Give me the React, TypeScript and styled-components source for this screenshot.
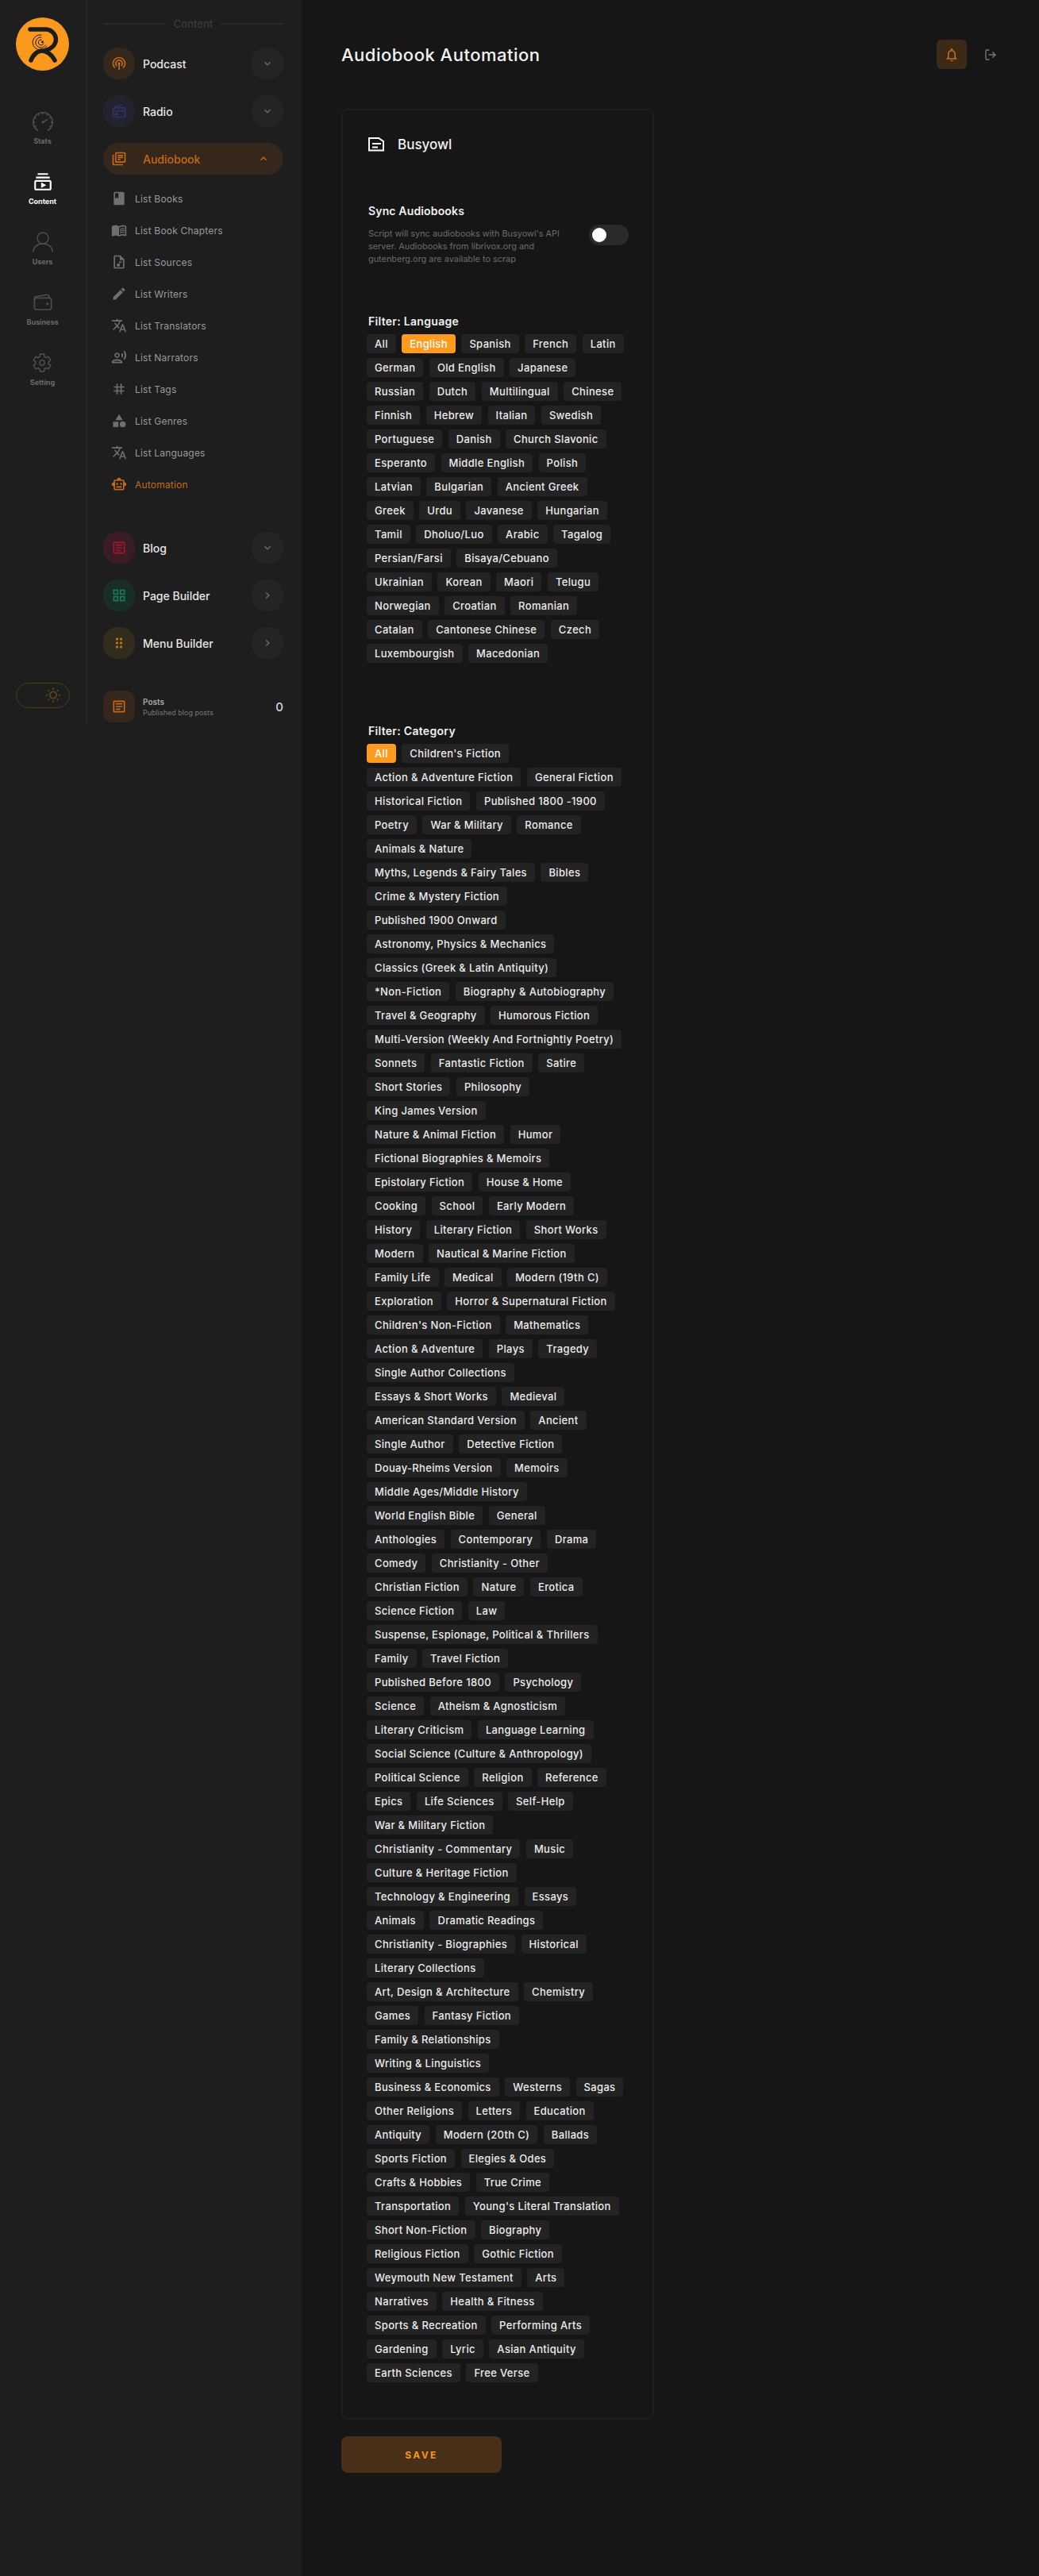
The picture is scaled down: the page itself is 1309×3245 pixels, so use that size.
import React from 'react';
import styled, { createGlobalStyle } from 'styled-components';
import {
  MdOutlineLibraryBooks, MdBook, MdOutlineMenuBook, MdOutlineAudioFile, MdEdit, MdTranslate,
  MdOutlineRecordVoiceOver, MdTag, MdCategory, MdOutlineSmartToy, MdOutlineArticle, MdOutlineGridView,
  MdDragIndicator, MdOutlineRadio, MdOutlinePodcasts, MdKeyboardArrowDown, MdKeyboardArrowUp,
  MdKeyboardArrowRight, MdOutlineNotifications, MdOutlineSubscriptions, MdOutlineWbSunny,
} from 'react-icons/md';
import { SlSpeedometer } from 'react-icons/sl';
import { IoSettingsOutline, IoWalletOutline } from 'react-icons/io5';
import { FiLogOut } from 'react-icons/fi';

const languageRows = [
  ['All', 'English', 'Spanish', 'French', 'Latin'],
  ['German', 'Old English', 'Japanese'],
  ['Russian', 'Dutch', 'Multilingual', 'Chinese'],
  ['Finnish', 'Hebrew', 'Italian', 'Swedish'],
  ['Portuguese', 'Danish', 'Church Slavonic'],
  ['Esperanto', 'Middle English', 'Polish'],
  ['Latvian', 'Bulgarian', 'Ancient Greek'],
  ['Greek', 'Urdu', 'Javanese', 'Hungarian'],
  ['Tamil', 'Dholuo/Luo', 'Arabic', 'Tagalog'],
  ['Persian/Farsi', 'Bisaya/Cebuano'],
  ['Ukrainian', 'Korean', 'Maori', 'Telugu'],
  ['Norwegian', 'Croatian', 'Romanian'],
  ['Catalan', 'Cantonese Chinese', 'Czech'],
  ['Luxembourgish', 'Macedonian'],
];

const categoryRows = [
  ['All', "Children's Fiction"],
  ['Action & Adventure Fiction', 'General Fiction'],
  ['Historical Fiction', 'Published 1800 -1900'],
  ['Poetry', 'War & Military', 'Romance'],
  ['Animals & Nature'],
  ['Myths, Legends & Fairy Tales', 'Bibles'],
  ['Crime & Mystery Fiction'],
  ['Published 1900 Onward'],
  ['Astronomy, Physics & Mechanics'],
  ['Classics (Greek & Latin Antiquity)'],
  ['*Non-Fiction', 'Biography & Autobiography'],
  ['Travel & Geography', 'Humorous Fiction'],
  ['Multi-Version (Weekly And Fortnightly Poetry)'],
  ['Sonnets', 'Fantastic Fiction', 'Satire'],
  ['Short Stories', 'Philosophy'],
  ['King James Version'],
  ['Nature & Animal Fiction', 'Humor'],
  ['Fictional Biographies & Memoirs'],
  ['Epistolary Fiction', 'House & Home'],
  ['Cooking', 'School', 'Early Modern'],
  ['History', 'Literary Fiction', 'Short Works'],
  ['Modern', 'Nautical & Marine Fiction'],
  ['Family Life', 'Medical', 'Modern (19th C)'],
  ['Exploration', 'Horror & Supernatural Fiction'],
  ["Children's Non-Fiction", 'Mathematics'],
  ['Action & Adventure', 'Plays', 'Tragedy'],
  ['Single Author Collections'],
  ['Essays & Short Works', 'Medieval'],
  ['American Standard Version', 'Ancient'],
  ['Single Author', 'Detective Fiction'],
  ['Douay-Rheims Version', 'Memoirs'],
  ['Middle Ages/Middle History'],
  ['World English Bible', 'General'],
  ['Anthologies', 'Contemporary', 'Drama'],
  ['Comedy', 'Christianity - Other'],
  ['Christian Fiction', 'Nature', 'Erotica'],
  ['Science Fiction', 'Law'],
  ['Suspense, Espionage, Political & Thrillers'],
  ['Family', 'Travel Fiction'],
  ['Published Before 1800', 'Psychology'],
  ['Science', 'Atheism & Agnosticism'],
  ['Literary Criticism', 'Language Learning'],
  ['Social Science (Culture & Anthropology)'],
  ['Political Science', 'Religion', 'Reference'],
  ['Epics', 'Life Sciences', 'Self-Help'],
  ['War & Military Fiction'],
  ['Christianity - Commentary', 'Music'],
  ['Culture & Heritage Fiction'],
  ['Technology & Engineering', 'Essays'],
  ['Animals', 'Dramatic Readings'],
  ['Christianity - Biographies', 'Historical'],
  ['Literary Collections'],
  ['Art, Design & Architecture', 'Chemistry'],
  ['Games', 'Fantasy Fiction'],
  ['Family & Relationships'],
  ['Writing & Linguistics'],
  ['Business & Economics', 'Westerns', 'Sagas'],
  ['Other Religions', 'Letters', 'Education'],
  ['Antiquity', 'Modern (20th C)', 'Ballads'],
  ['Sports Fiction', 'Elegies & Odes'],
  ['Crafts & Hobbies', 'True Crime'],
  ['Transportation', "Young's Literal Translation"],
  ['Short Non-Fiction', 'Biography'],
  ['Religious Fiction', 'Gothic Fiction'],
  ['Weymouth New Testament', 'Arts'],
  ['Narratives', 'Health & Fitness'],
  ['Sports & Recreation', 'Performing Arts'],
  ['Gardening', 'Lyric', 'Asian Antiquity'],
  ['Earth Sciences', 'Free Verse'],
];

const GlobalStyle = createGlobalStyle`
  html, body {
    margin: 0;
    padding: 0;
    background: #161616;
    font-family: Inter, "Open Sans", sans-serif;
  }
  * { box-sizing: border-box; }
`;

const Page = styled.div`
  display: flex;
  width: 100%;
  height: 3245px;
  overflow: hidden;
  background: #161616;
`;

const Sidebar = styled.aside`
  display: flex;
  flex: 0 0 380px;
  align-items: flex-start;
  background: #1e1e1e;
`;

const Rail = styled.nav`
  display: flex;
  flex-direction: column;
  align-items: center;
  flex: 0 0 110px;
  height: 912px;
  padding: 22px 2px 0 0;
  border-right: 1px solid #2a2a2a;
`;

const Logo = styled.svg`
  width: 67px;
  height: 67px;
  flex: none;
  margin-bottom: 51px;
`;

const RailItem = styled.div<{ $active?: boolean }>`
  display: flex;
  flex-direction: column;
  align-items: center;
  height: 76px;
  gap: 6px;
  color: ${p => (p.$active ? '#ffffff' : '#4d4d4d')};
  font-size: 26px;

  span {
    font-size: 9px;
    font-weight: 700;
    line-height: 12px;
    color: ${p => (p.$active ? '#ffffff' : '#6a6a6a')};
  }
`;

const ThemeToggle = styled.div`
  display: flex;
  align-items: center;
  justify-content: flex-end;
  width: 68px;
  height: 32px;
  margin-top: 340px;
  padding-right: 10px;
  border: 1px solid #4a3a14;
  border-radius: 16px;
  color: #5d4716;
  font-size: 20px;
`;

const Panel = styled.div`
  flex: 1;
  display: flex;
  flex-direction: column;
  padding: 20px 23px 0 20px;
`;

const PanelHeading = styled.div`
  display: flex;
  align-items: center;
  gap: 10px;
  height: 20px;
  margin-bottom: 20px;
  font-size: 13px;
  font-weight: 500;
  color: #3a3a3a;

  &::before, &::after {
    content: '';
    flex: 1;
    height: 2px;
    background: #2a2a2a;
  }
`;

const NavGroup = styled.div<{ $top?: number }>`
  display: flex;
  flex-direction: column;
  gap: 20px;
  margin-top: ${p => p.$top ?? 0}px;
`;

const NavRow = styled.div`
  display: flex;
  align-items: center;
  height: 40px;
  gap: 10px;
  font-size: 14px;
  font-weight: 500;
  color: #e6e6e6;
`;

const Tile = styled.div<{ $bg: string; $fg: string }>`
  display: flex;
  align-items: center;
  justify-content: center;
  width: 40px;
  height: 40px;
  flex: none;
  border-radius: 18px;
  background: ${p => p.$bg};
  color: ${p => p.$fg};
  font-size: 20px;
`;

const Chevron = styled.div`
  display: flex;
  align-items: center;
  justify-content: center;
  width: 40px;
  height: 40px;
  margin-left: auto;
  border-radius: 18px;
  background: #242424;
  color: #6b6b6b;
  font-size: 16px;
`;

const ActiveRow = styled.div`
  display: flex;
  align-items: center;
  height: 40px;
  margin-top: 20px;
  padding: 0 17px 0 10px;
  border-radius: 20px;
  background: #35271b;
  color: #c26a18;
  font-size: 14px;
  font-weight: 500;

  svg:first-child {
    font-size: 20px;
    margin-right: 20px;
  }
  svg:last-child {
    font-size: 16px;
    margin-left: auto;
  }
`;

const SubList = styled.div`
  display: flex;
  flex-direction: column;
  margin-top: 10px;
`;

const SubItem = styled.div<{ $active?: boolean }>`
  display: flex;
  align-items: center;
  gap: 10px;
  height: 40px;
  padding-left: 10px;
  font-size: 12px;
  letter-spacing: 0.2px;
  color: ${p => (p.$active ? '#c26a18' : '#9a9a9a')};

  svg {
    flex: none;
    font-size: 20px;
    color: ${p => (p.$active ? '#c26a18' : '#6f6f6f')};
  }
`;

const StatRow = styled.div`
  display: flex;
  align-items: center;
  gap: 10px;
  margin-top: 40px;
`;

const StatTile = styled(Tile)`
  border-radius: 12px;
`;

const StatText = styled.div`
  display: flex;
  flex-direction: column;
  gap: 2px;
  font-size: 9px;
  color: #777777;

  strong {
    font-size: 10px;
    font-weight: 600;
    color: #a8a8a8;
  }
`;

const StatValue = styled.div`
  margin-left: auto;
  font-size: 15px;
  font-weight: 500;
  color: #cfd8dc;
`;

const Main = styled.main`
  flex: 1;
  display: flex;
  flex-direction: column;
  align-items: flex-start;
  padding: 50px 50px 0;
`;

const Header = styled.header`
  display: flex;
  align-items: center;
  width: 100%;
  height: 37px;
`;

const Title = styled.h1`
  margin: 0;
  font-size: 22px;
  font-weight: 500;
  letter-spacing: 0.5px;
  color: #f2f2f2;
`;

const BellButton = styled.div`
  display: flex;
  align-items: center;
  justify-content: center;
  width: 38px;
  height: 37px;
  margin-left: auto;
  border-radius: 6px;
  background: #3d2a16;
  color: #c26a18;
  font-size: 20px;
`;

const ExitButton = styled.div`
  display: flex;
  margin: 0 3px 0 22px;
  color: #7a7a7a;
  font-size: 16px;
`;

const Card = styled.section`
  width: 394px;
  margin-top: 50px;
  padding: 33px 30px 45px 32px;
  border: 2px solid #1e1e1e;
  border-radius: 8px;
`;

const CardTitle = styled.div`
  display: flex;
  align-items: center;
  gap: 16px;
  height: 20px;
  font-size: 17px;
  font-weight: 500;
  color: #f2f2f2;
`;

const SyncTitle = styled.div`
  height: 20px;
  margin-top: 64px;
  margin-bottom: 10px;
  font-size: 14px;
  font-weight: 600;
  letter-spacing: 0.15px;
  line-height: 20px;
  color: #f0f0f0;
`;

const SyncRow = styled.div`
  display: flex;
  justify-content: space-between;
  align-items: flex-start;
`;

const SyncText = styled.p`
  width: 245px;
  margin: 0;
  font-size: 10.9px;
  line-height: 16px;
  color: #6c6c6c;
`;

const Switch = styled.div`
  display: flex;
  align-items: center;
  width: 50px;
  height: 26px;
  margin-top: -3px;
  padding-left: 4px;
  border-radius: 13px;
  background: #2a2a2a;

  &::before {
    content: '';
    width: 18px;
    height: 18px;
    border-radius: 50%;
    background: #ffffff;
  }
`;

const FilterLabel = styled.div<{ $top: number }>`
  height: 20px;
  margin-top: ${p => p.$top}px;
  font-size: 14px;
  font-weight: 600;
  letter-spacing: 0.3px;
  line-height: 20px;
  color: #f0f0f0;
`;

const ChipList = styled.div`
  display: flex;
  flex-direction: column;
  gap: 6px;
  margin: 6px 0 0 -2px;
`;

const ChipRow = styled.div`
  display: flex;
  gap: 7.5px;
`;

const Chip = styled.span<{ $active?: boolean }>`
  height: 24px;
  padding: 0 10px;
  border-radius: 4px;
  background: ${p => (p.$active ? '#ff9a1f' : '#232323')};
  font-size: 13px;
  font-weight: 500;
  line-height: 24px;
  letter-spacing: 0.35px;
  white-space: nowrap;
  color: ${p => (p.$active ? '#ffffff' : '#ececec')};
`;

const SaveButton = styled.button`
  width: 202px;
  height: 46px;
  margin-top: 21px;
  border: 0;
  border-radius: 8px;
  background: #482f18;
  color: #f7931e;
  font-family: inherit;
  font-size: 12px;
  font-weight: 700;
  letter-spacing: 2.4px;
`;

const BusyIcon = () => (
  <svg width="21" height="18" viewBox="0 0 21 18" fill="none" stroke="#fff" strokeWidth="2">
    <path d="M1 16.500V1h12l6 4v11.500H1z" />
    <path d="M5 8h11M5 12.500h7" />
  </svg>
);

const UserIcon = () => (
  <svg width="26" height="26" viewBox="0 0 26 26" fill="none" stroke="currentColor" strokeWidth="1.500">
    <circle cx="13" cy="8" r="7" />
    <path d="M1 25.500c0-6.500 5-10.500 12-10.500s12 4 12 10.500" />
  </svg>
);

const Chips = ({ rows, active }: { rows: string[][]; active: string }) => (
  <ChipList>
    {rows.map((row, i) => (
      <ChipRow key={i}>
        {row.map(name => (
          <Chip key={name} $active={name === active}>{name}</Chip>
        ))}
      </ChipRow>
    ))}
  </ChipList>
);

const subItems = [
  { label: 'List Books', icon: <MdBook /> },
  { label: 'List Book Chapters', icon: <MdOutlineMenuBook /> },
  { label: 'List Sources', icon: <MdOutlineAudioFile /> },
  { label: 'List Writers', icon: <MdEdit /> },
  { label: 'List Translators', icon: <MdTranslate /> },
  { label: 'List Narrators', icon: <MdOutlineRecordVoiceOver /> },
  { label: 'List Tags', icon: <MdTag /> },
  { label: 'List Genres', icon: <MdCategory /> },
  { label: 'List Languages', icon: <MdTranslate /> },
];

const App: React.FC = () => (
  <Page>
    <GlobalStyle />
    <Sidebar>
      <Rail>
        <Logo viewBox="0 0 67 67">
          <circle cx="33.500" cy="33.500" r="33.500" fill="#fb991f" />
          <g fill="none" stroke="#1b1b1b" strokeLinecap="round">
            <path d="M18 15h20a13 13 0 0 1 12 16c-2 6-8 9-11 10" strokeWidth="5.500" />
            <path d="M19 54c3-8 9-12 14-12s12 4 16 12" strokeWidth="5.500" />
            <path d="M32 22a9.500 9.500 0 1 0 7 14" strokeWidth="1" />
            <path d="M32 25a6.500 6.500 0 1 0 5 10" strokeWidth="1" />
            <path d="M32 28a3.500 3.500 0 1 0 3 5" strokeWidth="1" />
            <circle cx="33.500" cy="31" r="0.800" strokeWidth="1.200" />
          </g>
        </Logo>
        <RailItem><SlSpeedometer /><span>Stats</span></RailItem>
        <RailItem $active><MdOutlineSubscriptions /><span>Content</span></RailItem>
        <RailItem><UserIcon /><span>Users</span></RailItem>
        <RailItem><IoWalletOutline /><span>Business</span></RailItem>
        <RailItem><IoSettingsOutline /><span>Setting</span></RailItem>
        <ThemeToggle><MdOutlineWbSunny /></ThemeToggle>
      </Rail>
      <Panel>
        <PanelHeading>Content</PanelHeading>
        <NavGroup>
          <NavRow>
            <Tile $bg="#35271b" $fg="#c26a18"><MdOutlinePodcasts /></Tile>
            Podcast
            <Chevron><MdKeyboardArrowDown /></Chevron>
          </NavRow>
          <NavRow>
            <Tile $bg="#23222f" $fg="#33306e"><MdOutlineRadio /></Tile>
            Radio
            <Chevron><MdKeyboardArrowDown /></Chevron>
          </NavRow>
        </NavGroup>
        <ActiveRow>
          <MdOutlineLibraryBooks />
          Audiobook
          <MdKeyboardArrowUp />
        </ActiveRow>
        <SubList>
          {subItems.map(item => (
            <SubItem key={item.label}>{item.icon}{item.label}</SubItem>
          ))}
          <SubItem $active><MdOutlineSmartToy />Automation</SubItem>
        </SubList>
        <NavGroup $top={40}>
          <NavRow>
            <Tile $bg="#3a1c24" $fg="#a3152f"><MdOutlineArticle /></Tile>
            Blog
            <Chevron><MdKeyboardArrowDown /></Chevron>
          </NavRow>
          <NavRow>
            <Tile $bg="#1a2e28" $fg="#157a55"><MdOutlineGridView /></Tile>
            Page Builder
            <Chevron><MdKeyboardArrowRight /></Chevron>
          </NavRow>
          <NavRow>
            <Tile $bg="#332b1b" $fg="#a8791a"><MdDragIndicator /></Tile>
            Menu Builder
            <Chevron><MdKeyboardArrowRight /></Chevron>
          </NavRow>
        </NavGroup>
        <StatRow>
          <StatTile $bg="#35271b" $fg="#c26a18"><MdOutlineArticle /></StatTile>
          <StatText>
            <strong>Posts</strong>
            Published blog posts
          </StatText>
          <StatValue>0</StatValue>
        </StatRow>
      </Panel>
    </Sidebar>
    <Main>
      <Header>
        <Title>Audiobook Automation</Title>
        <BellButton><MdOutlineNotifications /></BellButton>
        <ExitButton><FiLogOut /></ExitButton>
      </Header>
      <Card>
        <CardTitle><BusyIcon />Busyowl</CardTitle>
        <SyncTitle>Sync Audiobooks</SyncTitle>
        <SyncRow>
          <SyncText>
            Script will sync audiobooks with Busyowl's API server. Audiobooks from librivox.org and
            gutenberg.org are available to scrap
          </SyncText>
          <Switch />
        </SyncRow>
        <FilterLabel $top={61}>Filter: Language</FilterLabel>
        <Chips rows={languageRows} active="English" />
        <FilterLabel $top={76}>Filter: Category</FilterLabel>
        <Chips rows={categoryRows} active="All" />
      </Card>
      <SaveButton>SAVE</SaveButton>
    </Main>
  </Page>
);

export default App;
